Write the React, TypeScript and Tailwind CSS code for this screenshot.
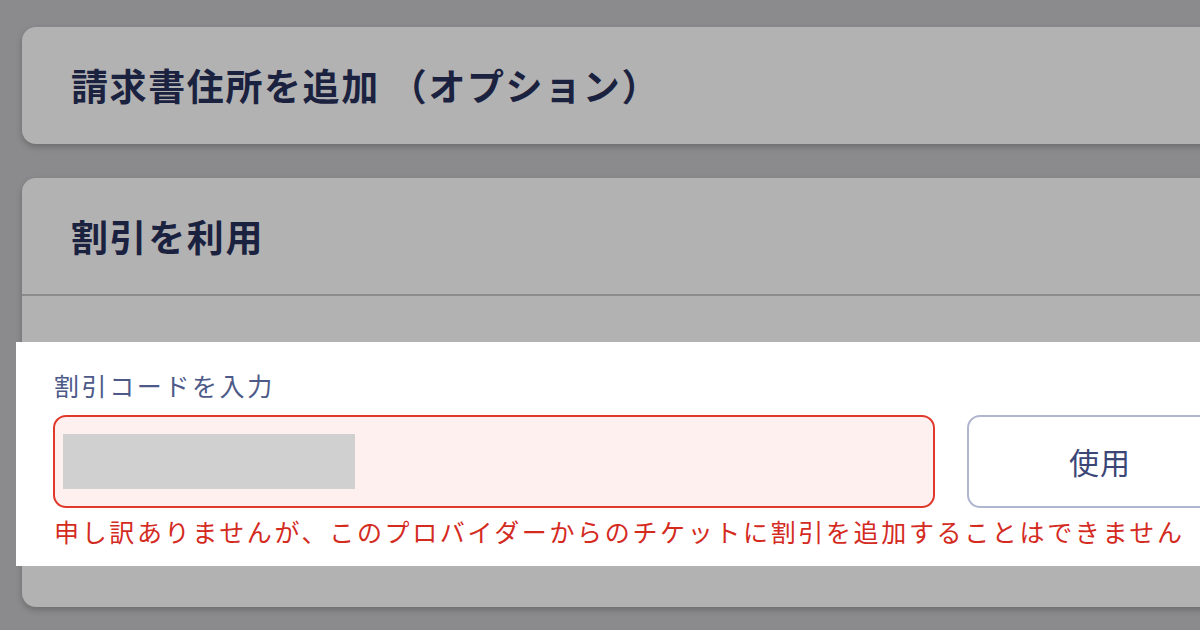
import React from "react";

const jp = { fontFamily: '"Noto Sans CJK JP", "Noto Sans", sans-serif' };

export default function App() {
  return (
    <div
      className="w-[1200px] h-[630px] overflow-hidden bg-[#8b8b8d] pl-[22px] pt-[27px]"
      style={jp}
    >
      <div className="w-[1220px] h-[117px] rounded-[14px] bg-[#b2b2b2] shadow-[0_3px_6px_rgba(0,0,0,0.22)] flex items-center pl-[49px]">
        <h2 className="text-[37px] font-bold text-[#1b2240] tracking-[1.6px] leading-none">
          請求書住所を追加 （オプション）
        </h2>
      </div>

      <div className="mt-[34px] w-[1220px] h-[429px] rounded-[14px] bg-[#b2b2b2] shadow-[0_3px_6px_rgba(0,0,0,0.22)] flex flex-col">
        <div className="h-[118px] flex items-center pl-[49px] border-b-2 border-[#8c8c8c]">
          <h2 className="text-[37px] font-bold text-[#1b2240] tracking-[1.6px] leading-none">
            割引を利用
          </h2>
        </div>
        <div className="-ml-[6px] mt-[46px] w-[1230px] h-[224px] bg-white pl-[37px] pt-[28px] overflow-hidden">
          <div className="text-[25px] leading-[30px] text-[#4d5a88] tracking-[2.6px] pl-[1px]">
            割引コードを入力
          </div>
          <div className="mt-[15px] flex gap-[32px]">
            <div className="w-[882px] h-[93px] rounded-[13px] border-2 border-[#e0392b] bg-[#fff0f0] flex items-center pl-[8px]">
              <div className="w-[292px] h-[55px] bg-[#d0d0d0]" />
            </div>
            <button className="w-[266px] h-[93px] rounded-[13px] border-2 border-[#b0b6cf] bg-white text-[30px] text-[#3b4677] tracking-[1px]">
              使用
            </button>
          </div>
          <div className="mt-[6px] text-[25px] leading-[34px] text-[#d42b1f] tracking-[2.65px] whitespace-nowrap pl-[1px]">
            申し訳ありませんが、このプロバイダーからのチケットに割引を追加することはできません
          </div>
        </div>
      </div>
    </div>
  );
}
